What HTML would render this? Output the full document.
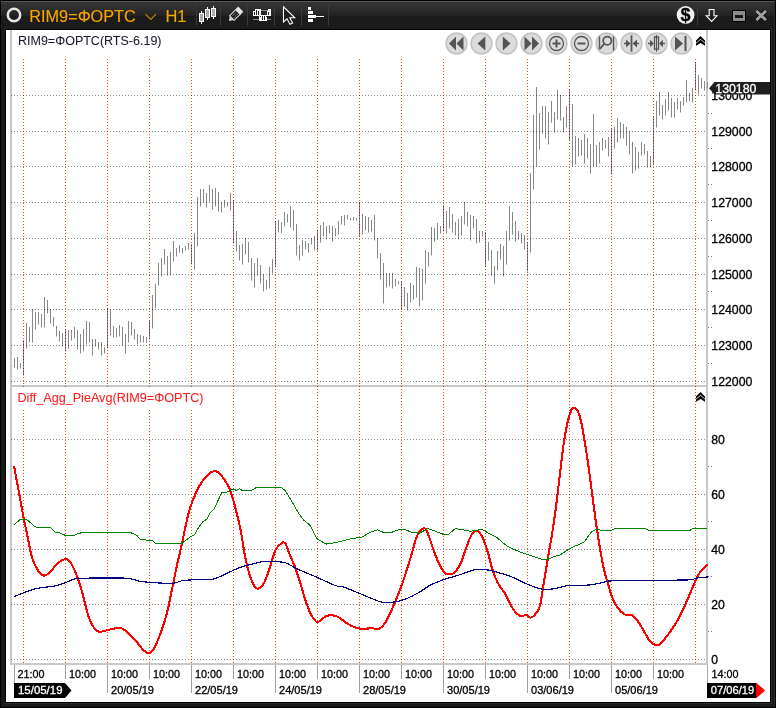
<!DOCTYPE html>
<html><head><meta charset="utf-8"><style>
html,body{margin:0;padding:0;background:#1a1a1a;width:776px;height:708px;overflow:hidden}
svg{display:block}
</style></head><body><svg width="776" height="708" viewBox="0 0 776 708"><rect x="0" y="0" width="776" height="708" fill="#1a1a1a"/><defs><linearGradient id="tb" x1="0" y1="0" x2="0" y2="1"><stop offset="0" stop-color="#343434"/><stop offset="0.22" stop-color="#2f2f2f"/><stop offset="0.52" stop-color="#222"/><stop offset="0.52" stop-color="#1b1b1b"/><stop offset="1" stop-color="#1b1b1b"/></linearGradient></defs><rect x="1" y="2" width="774" height="27" fill="url(#tb)"/><rect x="1" y="1" width="774" height="1" fill="#565656"/><rect x="0" y="0" width="776" height="1" fill="#000"/><rect x="0" y="0" width="1" height="708" fill="#000"/><rect x="775" y="0" width="1" height="708" fill="#000"/><rect x="0" y="707" width="776" height="1" fill="#000"/><rect x="774" y="1" width="1" height="706" fill="#2c2c2c"/><rect x="5" y="703" width="767" height="1" fill="#2c2c2c"/><rect x="771" y="29" width="1" height="675" fill="#2c2c2c"/><rect x="5" y="29" width="766" height="674" fill="#000"/><rect x="6" y="30" width="764" height="672" fill="#fff"/><circle cx="14" cy="15" r="6.2" fill="none" stroke="#e6e6e6" stroke-width="2.5"/><text x="29.3" y="21.9" font-family='"Liberation Sans", sans-serif' font-size="16" fill="#f7a600" stroke="#f7a600" stroke-width="0.15" textLength="106.5" lengthAdjust="spacingAndGlyphs">RIM9=ΦOPTC</text><path d="M145.5 14.2 L150.75 19.5 L156 14.2" fill="none" stroke="#d08a00" stroke-width="1.1"/><text x="165.5" y="21.9" font-family='"Liberation Sans", sans-serif' font-size="16" fill="#f7a600" stroke="#f7a600" stroke-width="0.15" textLength="21" lengthAdjust="spacingAndGlyphs">H1</text><rect x="196" y="5" width="1" height="21" fill="#3a3a3a"/><rect x="220" y="5" width="1" height="21" fill="#3a3a3a"/><rect x="247" y="5" width="1" height="21" fill="#3a3a3a"/><rect x="274" y="5" width="1" height="21" fill="#3a3a3a"/><rect x="301" y="5" width="1" height="21" fill="#3a3a3a"/><rect x="328" y="5" width="1" height="21" fill="#3a3a3a"/><rect x="697" y="5" width="1" height="21" fill="#3a3a3a"/><rect x="201" y="11" width="1" height="13" fill="#fff"/><rect x="199" y="13" width="5" height="9" fill="#fff"/><rect x="200" y="14" width="3" height="7" fill="#ababab"/><rect x="207" y="7" width="1" height="13" fill="#fff"/><rect x="205" y="9" width="5" height="9" fill="#fff"/><rect x="206" y="10" width="3" height="7" fill="#ababab"/><rect x="213" y="6" width="1" height="13" fill="#fff"/><rect x="211" y="8" width="5" height="9" fill="#fff"/><rect x="212" y="9" width="3" height="7" fill="#ababab"/><g transform="translate(235.1,14.8) rotate(-45)"><path d="M-8.2 0 L-4.5 -3.2 L-4.5 3.2 Z" fill="#c8c8c8"/><rect x="-4.5" y="-3.2" width="8.5" height="6.4" fill="#111" stroke="#d8d8d8" stroke-width="1.1"/><rect x="3.8" y="-3.6" width="4.2" height="7.2" fill="#e4e4e4"/><line x1="-3" y1="-1.1" x2="3.5" y2="-1.1" stroke="#fff" stroke-width="0.9" stroke-dasharray="0.9 0.9"/><line x1="-3" y1="1.2" x2="3.5" y2="1.2" stroke="#fff" stroke-width="0.9" stroke-dasharray="0.9 0.9"/><circle cx="-7.2" cy="0" r="0.9" fill="#fff"/></g><rect x="253" y="19" width="18" height="1" fill="#8a8a8a"/><rect x="261" y="10" width="7" height="1" fill="#8a8a8a"/><g fill="#fff"><rect x="253" y="11" width="8" height="5"/><rect x="255" y="9" width="6" height="2"/><rect x="259" y="15" width="8" height="6"/><rect x="267" y="11" width="4" height="5"/><rect x="268" y="9" width="3" height="2"/></g><g fill="#1e1e1e"><rect x="254" y="12" width="1" height="3"/><rect x="256" y="10" width="1" height="5"/><rect x="258" y="11" width="1" height="4"/><rect x="262" y="16" width="1" height="4"/><rect x="264" y="16" width="1" height="4"/><rect x="268" y="12" width="1" height="3"/><rect x="260" y="16" width="1" height="1"/><rect x="266" y="16" width="1" height="1"/></g><path d="M283.5 6.8 L283.5 22 L287 18.8 L290 24.2 L292.6 23 L289.8 17.8 L294.8 17.8 Z" fill="#1a1a1a" stroke="#fff" stroke-width="1.1" stroke-linejoin="miter"/><g fill="#fff"><rect x="308" y="7" width="3" height="3"/><rect x="308" y="11" width="5" height="3"/><rect x="308" y="15" width="8" height="3"/><rect x="308" y="19" width="5" height="3"/><rect x="316" y="16" width="8" height="1"/></g><circle cx="685.6" cy="15" r="8.9" fill="#f2f2f2"/><text x="685.5" y="20.6" font-family='"Liberation Sans", sans-serif' font-size="18" fill="#000" stroke="#000" stroke-width="0.3" text-anchor="middle" font-weight="bold">$</text><path d="M709.2 9.5 L714 9.5 L714 15.8 L717 15.8 L711.6 21.5 L706.2 15.8 L709.2 15.8 Z" fill="none" stroke="#fff" stroke-width="1.1"/><rect x="732" y="10" width="14" height="12" fill="#000"/><rect x="733" y="11" width="12" height="10" fill="#8c8c8c"/><rect x="735" y="15" width="8" height="3" fill="#141414"/><path d="M756.3 10.8 L766 20.2 M766 10.8 L756.3 20.2" stroke="#000" stroke-width="4.6"/><path d="M756.3 10.8 L766 20.2 M766 10.8 L756.3 20.2" stroke="#9c9c9c" stroke-width="3"/><rect x="10" y="30" width="2" height="634" fill="#c8c8c8"/><rect x="706" y="30" width="2" height="634" fill="#c8c8c8"/><rect x="707" y="664" width="1" height="19" fill="#a8a8a8"/><rect x="10" y="385" width="696" height="2" fill="#c8c8c8"/><rect x="10" y="663" width="698" height="2" fill="#c8c8c8"/><path d="M14.5 358V367.5M17.5 357V369.5M20.5 363V368.5M23.5 340V375.5M26.5 323V348.5M29.5 327V342.5M32.5 309V342.5M35.5 312V329.5M38.5 312V324.5M41.5 314V327.5M44.5 297V327.5M47.5 300V313.5M50.5 309V323.5M53.5 317V326.5M56.5 326V336.5M59.5 331V341.5M62.5 333V346.5M65.5 329V351.5M68.5 330V348.5M71.5 330V340.5M74.5 327V338.5M77.5 330V349.5M80.5 334V353.5M83.5 329V351.5M86.5 321V344.5M89.5 322V342.5M92.5 339V355.5M95.5 339V346.5M98.5 342V349.5M101.5 342V355.5M104.5 347V353.5M107.5 308V348.5M110.5 309V335.5M113.5 326V337.5M116.5 328V337.5M119.5 325V336.5M122.5 327V345.5M125.5 334V353.5M128.5 321V342.5M131.5 322V335.5M134.5 329V339.5M137.5 334V344.5M140.5 335V342.5M143.5 336V342.5M146.5 337V342.5M149.5 320V339.5M152.5 295V328.5M155.5 284V308.5M158.5 263V285.5M161.5 258V276.5M164.5 249V264.5M167.5 256V275.5M170.5 252V275.5M173.5 241V261.5M176.5 248V256.5M179.5 245V252.5M182.5 248V253.5M185.5 246V250.5M188.5 243V249.5M191.5 244V264.5M194.5 233V269.5M197.5 197V246.5M200.5 189V206.5M203.5 189V202.5M206.5 193V207.5M209.5 185V201.5M212.5 189V209.5M215.5 188V206.5M218.5 192V211.5M221.5 202V212.5M224.5 200V207.5M227.5 202V206.5M230.5 193V210.5M233.5 200V243.5M236.5 231V251.5M239.5 245V260.5M242.5 244V264.5M245.5 238V254.5M248.5 242V262.5M251.5 258V280.5M254.5 263V287.5M257.5 258V275.5M260.5 265V283.5M263.5 274V291.5M266.5 280V289.5M269.5 267V288.5M272.5 259V273.5M275.5 221V267.5M278.5 220V232.5M281.5 222V233.5M284.5 212V226.5M287.5 214V222.5M290.5 206V227.5M293.5 210V230.5M296.5 224V255.5M299.5 245V260.5M302.5 240V255.5M305.5 241V249.5M308.5 243V252.5M311.5 238V244.5M314.5 236V250.5M317.5 230V250.5M320.5 225V242.5M323.5 222V236.5M326.5 226V239.5M329.5 225V233.5M332.5 226V241.5M335.5 228V236.5M338.5 221V234.5M341.5 216V224.5M344.5 215V225.5M347.5 215V219.5M350.5 218V220.5M353.5 217V220.5M356.5 218V220.5M359.5 202V236.5M362.5 214V234.5M365.5 216V230.5M368.5 217V232.5M371.5 220V231.5M374.5 215V240.5M377.5 238V258.5M380.5 253V279.5M383.5 263V303.5M386.5 273V287.5M389.5 273V286.5M392.5 273V288.5M395.5 279V286.5M398.5 281V284.5M401.5 281V309.5M404.5 287V306.5M407.5 293V310.5M410.5 283V302.5M413.5 285V299.5M416.5 267V297.5M419.5 268V306.5M422.5 269V300.5M425.5 250V283.5M428.5 252V266.5M431.5 227V255.5M434.5 228V241.5M437.5 223V239.5M440.5 226V233.5M443.5 205V231.5M446.5 211V233.5M449.5 207V228.5M452.5 214V232.5M455.5 222V235.5M458.5 219V239.5M461.5 216V235.5M464.5 202V224.5M467.5 212V226.5M470.5 215V240.5M473.5 216V228.5M476.5 219V243.5M479.5 231V242.5M482.5 231V236.5M485.5 232V266.5M488.5 242V260.5M491.5 250V275.5M494.5 266V283.5M497.5 251V270.5M500.5 244V259.5M503.5 246V276.5M506.5 231V264.5M509.5 206V240.5M512.5 212V234.5M515.5 221V241.5M518.5 231V239.5M521.5 233V243.5M524.5 235V249.5M527.5 242V271.5M530.5 173V252.5M533.5 115V189.5M536.5 87V166.5M539.5 113V149.5M542.5 106V133.5M545.5 106V138.5M548.5 112V144.5M551.5 101V122.5M554.5 112V132.5M557.5 90V119.5M560.5 95V120.5M563.5 117V132.5M566.5 106V127.5M569.5 89V140.5M572.5 104V166.5M575.5 136V164.5M578.5 138V156.5M581.5 140V155.5M584.5 134V163.5M587.5 138V158.5M590.5 144V173.5M593.5 114V166.5M596.5 145V166.5M599.5 142V163.5M602.5 138V150.5M605.5 140V148.5M608.5 137V156.5M611.5 128V174.5M614.5 127V148.5M617.5 118V142.5M620.5 122V138.5M623.5 124V138.5M626.5 127V145.5M629.5 131V154.5M632.5 142V173.5M635.5 147V170.5M638.5 152V168.5M641.5 142V155.5M644.5 144V154.5M647.5 151V167.5M650.5 156V167.5M653.5 116V164.5M656.5 101V127.5M659.5 92V115.5M662.5 105V119.5M665.5 99V115.5M668.5 92V110.5M671.5 98V117.5M674.5 102V117.5M677.5 98V109.5M680.5 101V112.5M683.5 97V105.5M686.5 80V102.5M689.5 93V101.5M692.5 88V102.5M695.5 62V90.5M698.5 75V94.5M701.5 78V88.5M704.5 81V90.5M707.5 82V88.5" stroke="#888" stroke-width="1" fill="none"/><line x1="23.5" y1="59" x2="23.5" y2="385" stroke="#ff4a00" stroke-width="1" stroke-dasharray="1 2" style="mix-blend-mode:multiply"/><line x1="23.5" y1="386" x2="23.5" y2="663" stroke="#ff4a00" stroke-width="1" stroke-dasharray="1 2" style="mix-blend-mode:multiply"/><line x1="65.5" y1="59" x2="65.5" y2="385" stroke="#ff4a00" stroke-width="1" stroke-dasharray="1 2" style="mix-blend-mode:multiply"/><line x1="65.5" y1="386" x2="65.5" y2="663" stroke="#ff4a00" stroke-width="1" stroke-dasharray="1 2" style="mix-blend-mode:multiply"/><line x1="107.5" y1="59" x2="107.5" y2="385" stroke="#ff4a00" stroke-width="1" stroke-dasharray="1 2" style="mix-blend-mode:multiply"/><line x1="107.5" y1="386" x2="107.5" y2="663" stroke="#ff4a00" stroke-width="1" stroke-dasharray="1 2" style="mix-blend-mode:multiply"/><line x1="149.5" y1="59" x2="149.5" y2="385" stroke="#ff4a00" stroke-width="1" stroke-dasharray="1 2" style="mix-blend-mode:multiply"/><line x1="149.5" y1="386" x2="149.5" y2="663" stroke="#ff4a00" stroke-width="1" stroke-dasharray="1 2" style="mix-blend-mode:multiply"/><line x1="191.5" y1="59" x2="191.5" y2="385" stroke="#ff4a00" stroke-width="1" stroke-dasharray="1 2" style="mix-blend-mode:multiply"/><line x1="191.5" y1="386" x2="191.5" y2="663" stroke="#ff4a00" stroke-width="1" stroke-dasharray="1 2" style="mix-blend-mode:multiply"/><line x1="233.5" y1="59" x2="233.5" y2="385" stroke="#ff4a00" stroke-width="1" stroke-dasharray="1 2" style="mix-blend-mode:multiply"/><line x1="233.5" y1="386" x2="233.5" y2="663" stroke="#ff4a00" stroke-width="1" stroke-dasharray="1 2" style="mix-blend-mode:multiply"/><line x1="275.5" y1="59" x2="275.5" y2="385" stroke="#ff4a00" stroke-width="1" stroke-dasharray="1 2" style="mix-blend-mode:multiply"/><line x1="275.5" y1="386" x2="275.5" y2="663" stroke="#ff4a00" stroke-width="1" stroke-dasharray="1 2" style="mix-blend-mode:multiply"/><line x1="317.5" y1="59" x2="317.5" y2="385" stroke="#ff4a00" stroke-width="1" stroke-dasharray="1 2" style="mix-blend-mode:multiply"/><line x1="317.5" y1="386" x2="317.5" y2="663" stroke="#ff4a00" stroke-width="1" stroke-dasharray="1 2" style="mix-blend-mode:multiply"/><line x1="359.5" y1="59" x2="359.5" y2="385" stroke="#ff4a00" stroke-width="1" stroke-dasharray="1 2" style="mix-blend-mode:multiply"/><line x1="359.5" y1="386" x2="359.5" y2="663" stroke="#ff4a00" stroke-width="1" stroke-dasharray="1 2" style="mix-blend-mode:multiply"/><line x1="401.5" y1="59" x2="401.5" y2="385" stroke="#ff4a00" stroke-width="1" stroke-dasharray="1 2" style="mix-blend-mode:multiply"/><line x1="401.5" y1="386" x2="401.5" y2="663" stroke="#ff4a00" stroke-width="1" stroke-dasharray="1 2" style="mix-blend-mode:multiply"/><line x1="443.5" y1="59" x2="443.5" y2="385" stroke="#ff4a00" stroke-width="1" stroke-dasharray="1 2" style="mix-blend-mode:multiply"/><line x1="443.5" y1="386" x2="443.5" y2="663" stroke="#ff4a00" stroke-width="1" stroke-dasharray="1 2" style="mix-blend-mode:multiply"/><line x1="485.5" y1="59" x2="485.5" y2="385" stroke="#ff4a00" stroke-width="1" stroke-dasharray="1 2" style="mix-blend-mode:multiply"/><line x1="485.5" y1="386" x2="485.5" y2="663" stroke="#ff4a00" stroke-width="1" stroke-dasharray="1 2" style="mix-blend-mode:multiply"/><line x1="527.5" y1="59" x2="527.5" y2="385" stroke="#ff4a00" stroke-width="1" stroke-dasharray="1 2" style="mix-blend-mode:multiply"/><line x1="527.5" y1="386" x2="527.5" y2="663" stroke="#ff4a00" stroke-width="1" stroke-dasharray="1 2" style="mix-blend-mode:multiply"/><line x1="569.5" y1="59" x2="569.5" y2="385" stroke="#ff4a00" stroke-width="1" stroke-dasharray="1 2" style="mix-blend-mode:multiply"/><line x1="569.5" y1="386" x2="569.5" y2="663" stroke="#ff4a00" stroke-width="1" stroke-dasharray="1 2" style="mix-blend-mode:multiply"/><line x1="611.5" y1="59" x2="611.5" y2="385" stroke="#ff4a00" stroke-width="1" stroke-dasharray="1 2" style="mix-blend-mode:multiply"/><line x1="611.5" y1="386" x2="611.5" y2="663" stroke="#ff4a00" stroke-width="1" stroke-dasharray="1 2" style="mix-blend-mode:multiply"/><line x1="653.5" y1="59" x2="653.5" y2="385" stroke="#ff4a00" stroke-width="1" stroke-dasharray="1 2" style="mix-blend-mode:multiply"/><line x1="653.5" y1="386" x2="653.5" y2="663" stroke="#ff4a00" stroke-width="1" stroke-dasharray="1 2" style="mix-blend-mode:multiply"/><line x1="695.5" y1="59" x2="695.5" y2="385" stroke="#ff4a00" stroke-width="1" stroke-dasharray="1 2" style="mix-blend-mode:multiply"/><line x1="695.5" y1="386" x2="695.5" y2="663" stroke="#ff4a00" stroke-width="1" stroke-dasharray="1 2" style="mix-blend-mode:multiply"/><line x1="11" y1="95.5" x2="706" y2="95.5" stroke="#8c8c8c" stroke-width="1" stroke-dasharray="1 2" style="mix-blend-mode:multiply"/><text x="711.3" y="100.4" font-family='"Liberation Sans", sans-serif' font-size="12" fill="#000" stroke="#000" stroke-width="0.3" textLength="41" lengthAdjust="spacingAndGlyphs">130000</text><line x1="11" y1="131.5" x2="706" y2="131.5" stroke="#8c8c8c" stroke-width="1" stroke-dasharray="1 2" style="mix-blend-mode:multiply"/><text x="711.3" y="136.4" font-family='"Liberation Sans", sans-serif' font-size="12" fill="#000" stroke="#000" stroke-width="0.3" textLength="41" lengthAdjust="spacingAndGlyphs">129000</text><line x1="11" y1="166.5" x2="706" y2="166.5" stroke="#8c8c8c" stroke-width="1" stroke-dasharray="1 2" style="mix-blend-mode:multiply"/><text x="711.3" y="171.4" font-family='"Liberation Sans", sans-serif' font-size="12" fill="#000" stroke="#000" stroke-width="0.3" textLength="41" lengthAdjust="spacingAndGlyphs">128000</text><line x1="11" y1="202.5" x2="706" y2="202.5" stroke="#8c8c8c" stroke-width="1" stroke-dasharray="1 2" style="mix-blend-mode:multiply"/><text x="711.3" y="207.4" font-family='"Liberation Sans", sans-serif' font-size="12" fill="#000" stroke="#000" stroke-width="0.3" textLength="41" lengthAdjust="spacingAndGlyphs">127000</text><line x1="11" y1="238.5" x2="706" y2="238.5" stroke="#8c8c8c" stroke-width="1" stroke-dasharray="1 2" style="mix-blend-mode:multiply"/><text x="711.3" y="243.4" font-family='"Liberation Sans", sans-serif' font-size="12" fill="#000" stroke="#000" stroke-width="0.3" textLength="41" lengthAdjust="spacingAndGlyphs">126000</text><line x1="11" y1="274.5" x2="706" y2="274.5" stroke="#8c8c8c" stroke-width="1" stroke-dasharray="1 2" style="mix-blend-mode:multiply"/><text x="711.3" y="279.4" font-family='"Liberation Sans", sans-serif' font-size="12" fill="#000" stroke="#000" stroke-width="0.3" textLength="41" lengthAdjust="spacingAndGlyphs">125000</text><line x1="11" y1="309.5" x2="706" y2="309.5" stroke="#8c8c8c" stroke-width="1" stroke-dasharray="1 2" style="mix-blend-mode:multiply"/><text x="711.3" y="314.4" font-family='"Liberation Sans", sans-serif' font-size="12" fill="#000" stroke="#000" stroke-width="0.3" textLength="41" lengthAdjust="spacingAndGlyphs">124000</text><line x1="11" y1="345.5" x2="706" y2="345.5" stroke="#8c8c8c" stroke-width="1" stroke-dasharray="1 2" style="mix-blend-mode:multiply"/><text x="711.3" y="350.4" font-family='"Liberation Sans", sans-serif' font-size="12" fill="#000" stroke="#000" stroke-width="0.3" textLength="41" lengthAdjust="spacingAndGlyphs">123000</text><line x1="11" y1="381.5" x2="706" y2="381.5" stroke="#8c8c8c" stroke-width="1" stroke-dasharray="1 2" style="mix-blend-mode:multiply"/><text x="711.3" y="386.4" font-family='"Liberation Sans", sans-serif' font-size="12" fill="#000" stroke="#000" stroke-width="0.3" textLength="41" lengthAdjust="spacingAndGlyphs">122000</text><line x1="708" y1="113.5" x2="713" y2="113.5" stroke="#777" stroke-width="1" stroke-dasharray="1 2"/><line x1="708" y1="148.5" x2="713" y2="148.5" stroke="#777" stroke-width="1" stroke-dasharray="1 2"/><line x1="708" y1="184.5" x2="713" y2="184.5" stroke="#777" stroke-width="1" stroke-dasharray="1 2"/><line x1="708" y1="220.5" x2="713" y2="220.5" stroke="#777" stroke-width="1" stroke-dasharray="1 2"/><line x1="708" y1="256.5" x2="713" y2="256.5" stroke="#777" stroke-width="1" stroke-dasharray="1 2"/><line x1="708" y1="291.5" x2="713" y2="291.5" stroke="#777" stroke-width="1" stroke-dasharray="1 2"/><line x1="708" y1="327.5" x2="713" y2="327.5" stroke="#777" stroke-width="1" stroke-dasharray="1 2"/><line x1="708" y1="363.5" x2="713" y2="363.5" stroke="#777" stroke-width="1" stroke-dasharray="1 2"/><line x1="11" y1="439.5" x2="706" y2="439.5" stroke="#8c8c8c" stroke-width="1" stroke-dasharray="1 2" style="mix-blend-mode:multiply"/><text x="711.3" y="444.4" font-family='"Liberation Sans", sans-serif' font-size="12" fill="#000" stroke="#000" stroke-width="0.3" textLength="13.6" lengthAdjust="spacingAndGlyphs">80</text><line x1="11" y1="494.5" x2="706" y2="494.5" stroke="#8c8c8c" stroke-width="1" stroke-dasharray="1 2" style="mix-blend-mode:multiply"/><text x="711.3" y="499.4" font-family='"Liberation Sans", sans-serif' font-size="12" fill="#000" stroke="#000" stroke-width="0.3" textLength="13.6" lengthAdjust="spacingAndGlyphs">60</text><line x1="11" y1="549.5" x2="706" y2="549.5" stroke="#8c8c8c" stroke-width="1" stroke-dasharray="1 2" style="mix-blend-mode:multiply"/><text x="711.3" y="554.4" font-family='"Liberation Sans", sans-serif' font-size="12" fill="#000" stroke="#000" stroke-width="0.3" textLength="13.6" lengthAdjust="spacingAndGlyphs">40</text><line x1="11" y1="604.5" x2="706" y2="604.5" stroke="#8c8c8c" stroke-width="1" stroke-dasharray="1 2" style="mix-blend-mode:multiply"/><text x="711.3" y="609.4" font-family='"Liberation Sans", sans-serif' font-size="12" fill="#000" stroke="#000" stroke-width="0.3" textLength="13.6" lengthAdjust="spacingAndGlyphs">20</text><line x1="11" y1="659.5" x2="706" y2="659.5" stroke="#8c8c8c" stroke-width="1" stroke-dasharray="1 2" style="mix-blend-mode:multiply"/><text x="711.3" y="664.4" font-family='"Liberation Sans", sans-serif' font-size="12" fill="#000" stroke="#000" stroke-width="0.3" textLength="6.8" lengthAdjust="spacingAndGlyphs">0</text><line x1="708" y1="466.5" x2="713" y2="466.5" stroke="#777" stroke-width="1" stroke-dasharray="1 2"/><line x1="708" y1="521.5" x2="713" y2="521.5" stroke="#777" stroke-width="1" stroke-dasharray="1 2"/><line x1="708" y1="576.5" x2="713" y2="576.5" stroke="#777" stroke-width="1" stroke-dasharray="1 2"/><line x1="708" y1="631.5" x2="713" y2="631.5" stroke="#777" stroke-width="1" stroke-dasharray="1 2"/><path d="M14.00 466.00C14.87 470.60 17.67 485.32 19.20 493.60C20.73 501.88 21.82 508.55 23.20 515.70C24.58 522.85 26.03 529.53 27.50 536.50C28.97 543.47 30.32 551.93 32.00 557.50C33.68 563.07 35.83 566.95 37.60 569.90C39.37 572.85 41.07 574.40 42.60 575.20C44.13 576.00 44.90 575.98 46.80 574.70C48.70 573.42 51.87 569.65 54.00 567.50C56.13 565.35 57.77 563.18 59.60 561.80C61.43 560.42 63.47 559.45 65.00 559.20C66.53 558.95 67.40 558.90 68.80 560.30C70.20 561.70 71.87 564.47 73.40 567.60C74.93 570.73 76.47 574.73 78.00 579.10C79.53 583.47 81.07 588.28 82.60 593.80C84.13 599.32 85.67 607.13 87.20 612.20C88.73 617.27 89.97 620.98 91.80 624.20C93.63 627.42 95.90 630.43 98.20 631.50C100.50 632.57 103.13 631.05 105.60 630.60C108.07 630.15 110.55 629.27 113.00 628.80C115.45 628.33 117.87 627.20 120.30 627.80C122.73 628.40 125.15 630.40 127.60 632.40C130.05 634.40 132.53 637.03 135.00 639.80C137.47 642.57 140.25 646.80 142.40 649.00C144.55 651.20 146.08 652.85 147.90 653.00C149.72 653.15 151.48 652.40 153.30 649.90C155.12 647.40 157.12 642.15 158.80 638.00C160.48 633.85 161.87 629.92 163.40 625.00C164.93 620.08 166.47 614.92 168.00 608.50C169.53 602.08 171.07 593.92 172.60 586.50C174.13 579.08 175.67 570.98 177.20 564.00C178.73 557.02 180.43 550.82 181.80 544.60C183.17 538.38 184.03 532.75 185.40 526.70C186.77 520.65 188.30 513.82 190.00 508.30C191.70 502.78 193.60 498.03 195.60 493.60C197.60 489.17 199.87 484.92 202.00 481.70C204.13 478.48 206.42 476.05 208.40 474.30C210.38 472.55 212.22 471.50 213.90 471.20C215.58 470.90 216.82 471.22 218.50 472.50C220.18 473.78 222.15 476.15 224.00 478.90C225.85 481.65 227.77 484.40 229.60 489.00C231.43 493.60 233.17 499.67 235.00 506.50C236.83 513.33 238.90 521.58 240.60 530.00C242.30 538.42 243.67 549.47 245.20 557.00C246.73 564.53 248.12 570.13 249.80 575.20C251.48 580.27 253.62 585.27 255.30 587.40C256.98 589.53 258.37 588.90 259.90 588.00C261.43 587.10 262.82 585.50 264.50 582.00C266.18 578.50 268.17 572.33 270.00 567.00C271.83 561.67 273.50 554.03 275.50 550.00C277.50 545.97 280.33 543.83 282.00 542.80C283.67 541.77 284.30 542.05 285.50 543.80C286.70 545.55 287.67 549.57 289.20 553.30C290.73 557.03 292.87 561.30 294.70 566.20C296.53 571.10 298.37 576.88 300.20 582.70C302.03 588.52 303.87 595.73 305.70 601.10C307.53 606.47 309.52 611.53 311.20 614.90C312.88 618.27 314.42 620.23 315.80 621.30C317.18 622.37 317.80 622.15 319.50 621.30C321.20 620.45 323.70 617.18 326.00 616.20C328.30 615.22 331.17 615.22 333.30 615.40C335.43 615.58 336.65 616.07 338.80 617.30C340.95 618.53 343.75 621.22 346.20 622.80C348.65 624.38 351.05 625.82 353.50 626.80C355.95 627.78 357.83 628.45 360.90 628.70C363.97 628.95 368.83 628.30 371.90 628.30C374.97 628.30 377.15 629.50 379.30 628.70C381.45 627.90 382.97 626.12 384.80 623.50C386.63 620.88 388.47 616.88 390.30 613.00C392.13 609.12 393.97 604.63 395.80 600.20C397.63 595.77 399.47 591.45 401.30 586.40C403.13 581.35 404.95 575.72 406.80 569.90C408.65 564.08 410.87 556.72 412.40 551.50C413.93 546.28 414.78 541.97 416.00 538.60C417.22 535.23 418.48 532.98 419.70 531.30C420.92 529.62 422.25 528.82 423.30 528.50C424.35 528.18 424.93 527.72 426.00 529.40C427.07 531.08 428.47 535.23 429.70 538.60C430.93 541.97 431.87 545.47 433.40 549.60C434.93 553.73 437.07 559.57 438.90 563.40C440.73 567.23 442.57 570.77 444.40 572.60C446.23 574.43 448.07 574.55 449.90 574.40C451.73 574.25 453.55 573.68 455.40 571.70C457.25 569.72 459.30 566.18 461.00 562.50C462.70 558.82 464.08 553.73 465.60 549.60C467.12 545.47 468.73 540.60 470.10 537.70C471.47 534.80 472.42 533.22 473.80 532.20C475.18 531.18 476.87 530.53 478.40 531.60C479.93 532.67 481.47 535.28 483.00 538.60C484.53 541.92 486.07 546.45 487.60 551.50C489.13 556.55 490.52 563.70 492.20 568.90C493.88 574.10 495.55 578.55 497.70 582.70C499.85 586.85 502.95 590.12 505.10 593.80C507.25 597.48 508.77 601.60 510.60 604.80C512.43 608.00 514.27 611.10 516.10 613.00C517.93 614.90 519.92 615.88 521.60 616.20C523.28 616.52 524.67 614.67 526.20 614.90C527.73 615.13 529.12 617.92 530.80 617.60C532.48 617.28 534.77 615.00 536.30 613.00C537.83 611.00 538.77 610.52 540.00 605.60C541.23 600.68 542.32 591.77 543.70 583.50C545.08 575.23 546.77 565.13 548.30 556.00C549.83 546.87 551.53 537.55 552.90 528.70C554.27 519.85 555.28 512.40 556.50 502.90C557.72 493.40 558.97 481.80 560.20 471.70C561.43 461.60 562.67 450.57 563.90 442.30C565.13 434.03 566.37 427.47 567.60 422.10C568.83 416.73 570.23 412.50 571.30 410.10C572.37 407.70 572.93 407.55 574.00 407.70C575.07 407.85 576.47 408.45 577.70 411.00C578.93 413.55 580.18 417.63 581.40 423.00C582.62 428.37 583.78 435.70 585.00 443.20C586.22 450.70 587.47 459.27 588.70 468.00C589.93 476.73 591.02 485.33 592.40 495.60C593.78 505.87 595.17 517.70 597.00 529.60C598.83 541.50 601.52 557.83 603.40 567.00C605.28 576.17 606.87 579.67 608.30 584.60C609.73 589.53 610.47 592.77 612.00 596.60C613.53 600.43 615.37 604.63 617.50 607.60C619.63 610.57 622.35 613.17 624.80 614.40C627.25 615.63 629.90 613.68 632.20 615.00C634.50 616.32 636.62 619.55 638.60 622.30C640.58 625.05 642.27 628.43 644.10 631.50C645.93 634.57 647.77 638.47 649.60 640.70C651.43 642.93 653.42 644.28 655.10 644.90C656.78 645.52 657.85 645.72 659.70 644.40C661.55 643.08 663.90 639.92 666.20 637.00C668.50 634.08 671.05 630.73 673.50 626.90C675.95 623.07 678.75 618.13 680.90 614.00C683.05 609.87 684.57 606.23 686.40 602.10C688.23 597.97 690.07 593.48 691.90 589.20C693.73 584.92 695.72 579.62 697.40 576.40C699.08 573.18 700.32 571.90 702.00 569.90C703.68 567.90 706.58 565.32 707.50 564.40" fill="none" stroke="#ff0000" stroke-width="2.1" shape-rendering="crispEdges"/><polyline points="14.0,525.2 20.1,519.3 26.5,519.3 33.9,525.8 37.6,527.6 50.4,527.6 55.0,532.2 60.5,533.1 65.5,535.5 73.4,535.5 78.0,533.7 83.5,532.2 129.5,532.2 136.8,535.3 140.5,539.6 152.4,540.5 156.0,543.6 181.8,543.6 183.1,542.2 189.3,537.6 194.7,534.5 198.5,527.6 203.2,521.4 207.0,519.0 210.1,512.9 214.0,509.0 221.7,492.8 226.4,492.3 233.3,488.9 236.4,490.5 239.5,488.9 242.6,490.5 251.1,490.5 256.5,487.4 281.2,487.4 285.1,490.5 291.0,500.0 298.4,512.9 303.9,520.2 310.3,525.7 316.8,538.6 326.0,544.1 335.1,542.6 344.3,540.4 353.5,538.2 360.9,537.7 370.1,532.2 377.4,529.8 382.9,532.2 392.1,532.2 399.5,529.4 405.0,529.4 412.4,532.7 419.7,533.1 427.9,528.5 442.6,534.0 449.0,534.0 455.4,528.5 462.8,529.8 470.1,531.3 482.1,529.4 488.5,533.1 495.9,536.8 506.9,546.0 517.9,551.1 529.0,555.1 541.8,559.2 547.4,559.6 552.9,556.9 560.2,555.0 569.4,548.6 584.1,542.2 591.5,531.7 597.0,529.3 600.7,530.2 611.7,530.2 615.4,528.4 645.7,528.4 646.5,529.4 649.5,530.4 690.0,530.4 691.5,529.4 692.5,528.4 707.0,528.4" fill="none" stroke="#008000" stroke-width="1" shape-rendering="crispEdges"/><path d="M14.00 596.60C15.43 596.04 21.55 593.51 24.70 592.40C27.85 591.29 33.68 589.14 37.60 588.30C41.52 587.46 50.43 586.83 54.10 586.10C57.77 585.37 62.41 583.73 65.10 582.80C67.79 581.87 71.85 579.71 74.30 579.10C76.75 578.49 76.63 578.32 83.50 578.20C90.37 578.08 118.44 577.83 125.80 578.20C133.16 578.57 135.51 580.44 138.70 581.00C141.89 581.56 145.18 582.09 149.70 582.40C154.22 582.71 168.32 583.51 172.60 583.30C176.88 583.09 179.11 581.27 181.80 580.80C184.49 580.33 188.64 580.03 192.80 579.80C196.96 579.57 209.08 579.66 213.00 579.10C216.92 578.54 219.51 576.76 222.20 575.60C224.89 574.44 230.75 571.52 233.20 570.40C235.65 569.28 238.39 567.97 240.60 567.20C242.81 566.43 246.87 565.33 249.80 564.60C252.73 563.87 259.41 562.11 262.60 561.70C265.79 561.29 270.65 561.35 273.70 561.50C276.75 561.65 282.21 561.73 285.50 562.80C288.79 563.87 294.23 567.58 298.40 569.50C302.57 571.42 311.91 575.07 316.80 577.20C321.69 579.33 331.43 584.15 335.10 585.50C338.77 586.85 340.62 586.07 344.30 587.30C347.98 588.53 357.79 592.74 362.70 594.70C367.61 596.66 376.93 601.03 381.10 602.00C385.27 602.97 390.81 602.36 394.00 602.00C397.19 601.64 401.57 600.63 405.00 599.30C408.43 597.97 416.41 593.84 419.70 592.00C422.99 590.16 426.41 587.18 429.70 585.50C432.99 583.82 440.48 580.80 444.40 579.40C448.32 578.00 455.18 576.27 459.10 575.00C463.02 573.73 470.61 570.63 473.80 569.90C476.99 569.17 480.55 569.38 483.00 569.50C485.45 569.62 488.28 569.77 492.20 570.80C496.12 571.83 507.49 575.32 512.40 577.20C517.31 579.08 524.83 583.26 529.00 584.90C533.17 586.54 540.23 589.01 543.70 589.50C547.17 589.99 551.57 589.15 555.00 588.60C558.43 588.05 564.79 585.88 569.40 585.40C574.01 584.92 585.19 585.37 589.60 585.00C594.01 584.63 599.31 583.16 602.50 582.60C605.69 582.04 602.31 581.15 613.50 580.80C624.69 580.45 675.45 580.35 686.40 580.00C697.35 579.65 692.72 578.61 695.60 578.20C698.48 577.79 706.35 577.07 708.00 576.90" fill="none" stroke="#000080" stroke-width="1.2" shape-rendering="crispEdges"/><text x="18" y="44.9" font-family='"Liberation Sans", sans-serif' font-size="12" fill="#1a1a2a" stroke="#1a1a2a" stroke-width="0.05" textLength="143.5" lengthAdjust="spacingAndGlyphs">RIM9=ΦOPTC(RTS-6.19)</text><rect x="13" y="387" width="194" height="22" fill="#fff"/><text x="17.5" y="401.8" font-family='"Liberation Sans", sans-serif' font-size="12" fill="#ff1a1a" stroke="#ff1a1a" stroke-width="0.05" textLength="186" lengthAdjust="spacingAndGlyphs">Diff_Agg_PieAvg(RIM9=ΦOPTC)</text><circle cx="456.5" cy="43.5" r="10.4" fill="#dcdcdc" stroke="#c4c4c4" stroke-width="1.6"/><circle cx="481.5" cy="43.5" r="10.4" fill="#dcdcdc" stroke="#c4c4c4" stroke-width="1.6"/><circle cx="506.5" cy="43.5" r="10.4" fill="#dcdcdc" stroke="#c4c4c4" stroke-width="1.6"/><circle cx="531.5" cy="43.5" r="10.4" fill="#dcdcdc" stroke="#c4c4c4" stroke-width="1.6"/><circle cx="556.5" cy="43.5" r="10.4" fill="#dcdcdc" stroke="#c4c4c4" stroke-width="1.6"/><circle cx="581.5" cy="43.5" r="10.4" fill="#dcdcdc" stroke="#c4c4c4" stroke-width="1.6"/><circle cx="606.5" cy="43.5" r="10.4" fill="#dcdcdc" stroke="#c4c4c4" stroke-width="1.6"/><circle cx="631.5" cy="43.5" r="10.4" fill="#dcdcdc" stroke="#c4c4c4" stroke-width="1.6"/><circle cx="656.5" cy="43.5" r="10.4" fill="#dcdcdc" stroke="#c4c4c4" stroke-width="1.6"/><circle cx="681.5" cy="43.5" r="10.4" fill="#dcdcdc" stroke="#c4c4c4" stroke-width="1.6"/><path d="M449.0 43.5 L456.0 36.5 L456.0 50.5 Z M456.5 43.5 L463.5 36.5 L463.5 50.5 Z" fill="#555"/><path d="M477.5 43.5 L485.3 36.5 L485.3 50.5 Z" fill="#555"/><path d="M510.5 43.5 L502.8 36.5 L502.8 50.5 Z" fill="#555"/><path d="M539.0 43.5 L532.0 36.5 L532.0 50.5 Z M531.5 43.5 L524.5 36.5 L524.5 50.5 Z" fill="#555"/><circle cx="556.5" cy="43.5" r="7" fill="none" stroke="#555" stroke-width="1.3"/><path d="M552.5 43.5 H560.5 M556.5 39.5 V47.5" stroke="#555" stroke-width="2"/><circle cx="581.5" cy="43.5" r="7" fill="none" stroke="#555" stroke-width="1.3"/><path d="M577.5 43.5 H585.5" stroke="#555" stroke-width="2"/><path d="M599.5 36.5 V49.5 M613.5 36.5 V50.5" stroke="#555" stroke-width="1.4"/><circle cx="607.3" cy="40.8" r="4.1" fill="none" stroke="#555" stroke-width="1.8"/><path d="M604.2 43.9 L599.9 48.8" stroke="#555" stroke-width="1.8"/><path d="M631.5 35.3 V51.7" stroke="#555" stroke-width="1.8"/><path d="M624.0 43.5 H627.5 M635.5 43.5 H639.0" stroke="#555" stroke-width="1.6"/><path d="M630.5 43.5 L626.0 39.5 V47.5 Z M632.5 43.5 L637.0 39.5 V47.5 Z" fill="#555"/><rect x="654.5" y="36.9" width="4" height="12.3" fill="none" stroke="#555" stroke-width="1.3"/><path d="M656.5 35 V51.8" stroke="#555" stroke-width="1.1"/><path d="M648.0 43.5 H651.5 M661.5 43.5 H665.0" stroke="#555" stroke-width="1.6"/><path d="M653.9 43.5 L650.1 39.7 V47.3 Z M659.1 43.5 L662.9 39.7 V47.3 Z" fill="#555"/><path d="M675.0 36.5 L683.0 43.5 L675.0 50.5 Z" fill="#555"/><path d="M685.5 36 V51" stroke="#555" stroke-width="2"/><path d="M696.0 40.5 L700.5 36 L705.0 40.5 L705.0 42.7 L700.5 39 L696.0 42.7 Z M696.0 43.6 L700.5 39.8 L705.0 43.6 L705.0 45.8 L700.5 43 L696.0 45.8 Z" fill="#000"/><path d="M696.0 396.5 L700.5 392 L705.0 396.5 L705.0 398.7 L700.5 395 L696.0 398.7 Z M696.0 399.6 L700.5 395.8 L705.0 399.6 L705.0 401.8 L700.5 399 L696.0 401.8 Z" fill="#000"/><path d="M709 88.3 L714.5 82 L770 82 L770 94.5 L714.5 94.5 Z" fill="#1e1e1e"/><text x="715.3" y="93" font-family='"Liberation Sans", sans-serif' font-size="12" fill="#fff" stroke="#fff" stroke-width="0.3" textLength="41" lengthAdjust="spacingAndGlyphs">130180</text><rect x="14" y="665" width="1" height="28" fill="#a0a0a0"/><rect x="65" y="665" width="1" height="14" fill="#a0a0a0"/><rect x="107" y="665" width="1" height="28" fill="#a0a0a0"/><rect x="149" y="665" width="1" height="14" fill="#a0a0a0"/><rect x="191" y="665" width="1" height="28" fill="#a0a0a0"/><rect x="233" y="665" width="1" height="14" fill="#a0a0a0"/><rect x="275" y="665" width="1" height="28" fill="#a0a0a0"/><rect x="317" y="665" width="1" height="14" fill="#a0a0a0"/><rect x="359" y="665" width="1" height="28" fill="#a0a0a0"/><rect x="401" y="665" width="1" height="14" fill="#a0a0a0"/><rect x="443" y="665" width="1" height="28" fill="#a0a0a0"/><rect x="485" y="665" width="1" height="14" fill="#a0a0a0"/><rect x="527" y="665" width="1" height="28" fill="#a0a0a0"/><rect x="569" y="665" width="1" height="14" fill="#a0a0a0"/><rect x="611" y="665" width="1" height="28" fill="#a0a0a0"/><rect x="653" y="665" width="1" height="14" fill="#a0a0a0"/><text x="17.6" y="677.9" font-family='"Liberation Sans", sans-serif' font-size="11" fill="#000" stroke="#000" stroke-width="0.3" textLength="27" lengthAdjust="spacingAndGlyphs">21:00</text><text x="69" y="677.9" font-family='"Liberation Sans", sans-serif' font-size="11" fill="#000" stroke="#000" stroke-width="0.3" textLength="27" lengthAdjust="spacingAndGlyphs">10:00</text><text x="111" y="677.9" font-family='"Liberation Sans", sans-serif' font-size="11" fill="#000" stroke="#000" stroke-width="0.3" textLength="27" lengthAdjust="spacingAndGlyphs">10:00</text><text x="153" y="677.9" font-family='"Liberation Sans", sans-serif' font-size="11" fill="#000" stroke="#000" stroke-width="0.3" textLength="27" lengthAdjust="spacingAndGlyphs">10:00</text><text x="195" y="677.9" font-family='"Liberation Sans", sans-serif' font-size="11" fill="#000" stroke="#000" stroke-width="0.3" textLength="27" lengthAdjust="spacingAndGlyphs">10:00</text><text x="237" y="677.9" font-family='"Liberation Sans", sans-serif' font-size="11" fill="#000" stroke="#000" stroke-width="0.3" textLength="27" lengthAdjust="spacingAndGlyphs">10:00</text><text x="279" y="677.9" font-family='"Liberation Sans", sans-serif' font-size="11" fill="#000" stroke="#000" stroke-width="0.3" textLength="27" lengthAdjust="spacingAndGlyphs">10:00</text><text x="321" y="677.9" font-family='"Liberation Sans", sans-serif' font-size="11" fill="#000" stroke="#000" stroke-width="0.3" textLength="27" lengthAdjust="spacingAndGlyphs">10:00</text><text x="363" y="677.9" font-family='"Liberation Sans", sans-serif' font-size="11" fill="#000" stroke="#000" stroke-width="0.3" textLength="27" lengthAdjust="spacingAndGlyphs">10:00</text><text x="405" y="677.9" font-family='"Liberation Sans", sans-serif' font-size="11" fill="#000" stroke="#000" stroke-width="0.3" textLength="27" lengthAdjust="spacingAndGlyphs">10:00</text><text x="447" y="677.9" font-family='"Liberation Sans", sans-serif' font-size="11" fill="#000" stroke="#000" stroke-width="0.3" textLength="27" lengthAdjust="spacingAndGlyphs">10:00</text><text x="489" y="677.9" font-family='"Liberation Sans", sans-serif' font-size="11" fill="#000" stroke="#000" stroke-width="0.3" textLength="27" lengthAdjust="spacingAndGlyphs">10:00</text><text x="531" y="677.9" font-family='"Liberation Sans", sans-serif' font-size="11" fill="#000" stroke="#000" stroke-width="0.3" textLength="27" lengthAdjust="spacingAndGlyphs">10:00</text><text x="573" y="677.9" font-family='"Liberation Sans", sans-serif' font-size="11" fill="#000" stroke="#000" stroke-width="0.3" textLength="27" lengthAdjust="spacingAndGlyphs">10:00</text><text x="615" y="677.9" font-family='"Liberation Sans", sans-serif' font-size="11" fill="#000" stroke="#000" stroke-width="0.3" textLength="27" lengthAdjust="spacingAndGlyphs">10:00</text><text x="657" y="677.9" font-family='"Liberation Sans", sans-serif' font-size="11" fill="#000" stroke="#000" stroke-width="0.3" textLength="27" lengthAdjust="spacingAndGlyphs">10:00</text><text x="711.5" y="677.9" font-family='"Liberation Sans", sans-serif' font-size="11" fill="#000" stroke="#000" stroke-width="0.3" textLength="27" lengthAdjust="spacingAndGlyphs">14:00</text><text x="111" y="693.7" font-family='"Liberation Sans", sans-serif' font-size="11" fill="#000" stroke="#000" stroke-width="0.3" textLength="43" lengthAdjust="spacingAndGlyphs">20/05/19</text><text x="195" y="693.7" font-family='"Liberation Sans", sans-serif' font-size="11" fill="#000" stroke="#000" stroke-width="0.3" textLength="43" lengthAdjust="spacingAndGlyphs">22/05/19</text><text x="279" y="693.7" font-family='"Liberation Sans", sans-serif' font-size="11" fill="#000" stroke="#000" stroke-width="0.3" textLength="43" lengthAdjust="spacingAndGlyphs">24/05/19</text><text x="363" y="693.7" font-family='"Liberation Sans", sans-serif' font-size="11" fill="#000" stroke="#000" stroke-width="0.3" textLength="43" lengthAdjust="spacingAndGlyphs">28/05/19</text><text x="447" y="693.7" font-family='"Liberation Sans", sans-serif' font-size="11" fill="#000" stroke="#000" stroke-width="0.3" textLength="43" lengthAdjust="spacingAndGlyphs">30/05/19</text><text x="531" y="693.7" font-family='"Liberation Sans", sans-serif' font-size="11" fill="#000" stroke="#000" stroke-width="0.3" textLength="43" lengthAdjust="spacingAndGlyphs">03/06/19</text><text x="615" y="693.7" font-family='"Liberation Sans", sans-serif' font-size="11" fill="#000" stroke="#000" stroke-width="0.3" textLength="43" lengthAdjust="spacingAndGlyphs">05/06/19</text><path d="M14 683 H65 L71.5 690.5 L65 698 H14 Z" fill="#000"/><text x="18" y="693.7" font-family='"Liberation Sans", sans-serif' font-size="11" fill="#fff" stroke="#fff" stroke-width="0.3" textLength="44.5" lengthAdjust="spacingAndGlyphs">15/05/19</text><rect x="707" y="683" width="49" height="15" fill="#000"/><path d="M756 682.5 L765 690.5 L756 698.5 Z" fill="#ff0000"/><text x="710.8" y="693.7" font-family='"Liberation Sans", sans-serif' font-size="11" fill="#fff" stroke="#fff" stroke-width="0.3" textLength="43.5" lengthAdjust="spacingAndGlyphs">07/06/19</text></svg></body></html>
